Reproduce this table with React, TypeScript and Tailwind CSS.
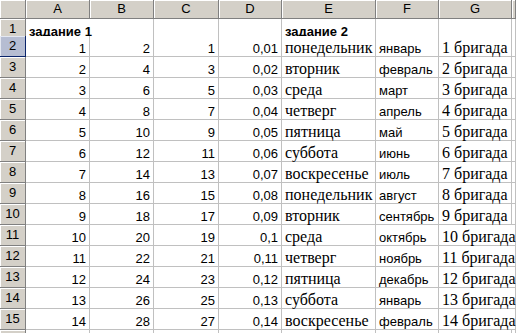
import React from "react";

const days = ["понедельник", "вторник", "среда", "четверг", "пятница", "суббота", "воскресенье"];
const months = ["январь", "февраль", "март", "апрель", "май", "июнь", "июль", "август", "сентябрь", "октябрь", "ноябрь", "декабрь"];

const SANS = "font-['Liberation_Sans',Arial,sans-serif]";
const SERIF = "font-['Liberation_Serif','Times_New_Roman',serif]";

const grid = "grid grid-cols-[26px_64px_64px_65px_63px_94px_63px_73px_1fr]";

function HeadCell({ children }: { children?: React.ReactNode }) {
  return (
    <div className={`h-[19px] bg-[#d4d0c8] border-r border-b border-[#808080] shadow-[inset_1px_1px_0_#ffffff] flex items-center justify-center text-[13px] text-black ${SANS}`}>
      {children}
    </div>
  );
}

function RowHead({ n, active }: { n?: number; active?: boolean }) {
  return (
    <div
      className={`border-b border-r flex items-center justify-center text-[13px] text-black ${SANS} ${
        active
          ? "bg-[#b6bdd2] border-[#0a246a] shadow-[inset_1px_1px_0_#e4e8f2]"
          : "bg-[#d4d0c8] border-[#808080] shadow-[inset_1px_1px_0_#ffffff]"
      }`}
    >
      {n}
    </div>
  );
}

function Cell({
  children,
  align = "right",
  serif,
  bold,
  span,
}: {
  children?: React.ReactNode;
  align?: "left" | "right";
  serif?: boolean;
  bold?: boolean;
  span?: boolean;
}) {
  return (
    <div
      className={`bg-white border-r border-b border-[#c0c0c0] flex items-end whitespace-nowrap overflow-visible text-black ${
        align === "right" ? "justify-end pr-[3px]" : "justify-start pl-[3px]"
      } ${serif ? `${SERIF} text-[16px] leading-[17px]` : `${SANS} text-[13px] leading-[14px]`} ${
        bold ? "font-bold" : ""
      } ${span ? "col-span-2" : ""}`}
    >
      {children}
    </div>
  );
}

export default function App() {
  const rows = Array.from({ length: 14 }, (_, i) => {
    const n = i + 1;
    const d = n / 100;
    return {
      a: n,
      b: 2 * n,
      c: 2 * n - 1,
      d: String(d).replace(".", ","),
      e: days[i % 7],
      f: months[i % 12],
      g: `${n} бригада`,
    };
  });

  return (
    <div className="w-[516px] h-[333px] overflow-hidden bg-white">
      <div className={`${grid}`}>
        <HeadCell />
        <HeadCell>A</HeadCell>
        <HeadCell>B</HeadCell>
        <HeadCell>C</HeadCell>
        <HeadCell>D</HeadCell>
        <HeadCell>E</HeadCell>
        <HeadCell>F</HeadCell>
        <HeadCell>G</HeadCell>
        <HeadCell />
      </div>
      <div className={`${grid} h-[17px]`}>
        <RowHead n={1} />
        <Cell align="left" bold span>
          задание 1
        </Cell>
        <Cell />
        <Cell />
        <Cell align="left" bold>
          задание 2
        </Cell>
        <Cell />
        <Cell />
        <Cell />
      </div>
      {rows.map((r, i) => (
        <div key={i} className={`${grid} h-[21px]`}>
          <RowHead n={i + 2} active={i === 0} />
          <Cell>{r.a}</Cell>
          <Cell>{r.b}</Cell>
          <Cell>{r.c}</Cell>
          <Cell>{r.d}</Cell>
          <Cell align="left" serif>
            {r.e}
          </Cell>
          <Cell align="left">{r.f}</Cell>
          {r.a >= 10 ? (
            <Cell align="left" serif span>
              {r.g}
            </Cell>
          ) : (
            <>
              <Cell align="left" serif>
                {r.g}
              </Cell>
              <Cell />
            </>
          )}
        </div>
      ))}
      <div className={`${grid} h-[21px]`}>
        <RowHead />
        <Cell />
        <Cell />
        <Cell />
        <Cell />
        <Cell />
        <Cell />
        <Cell />
        <Cell />
      </div>
    </div>
  );
}
